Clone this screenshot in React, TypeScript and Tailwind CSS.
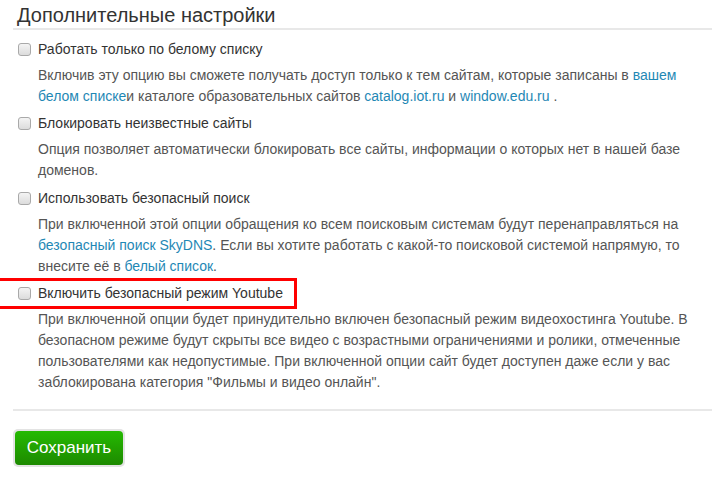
import type { ReactNode } from "react";

const link = "text-[#1f88b5] hover:underline";

function Option({
  label,
  children,
  marked = false,
}: {
  label: string;
  children: ReactNode;
  marked?: boolean;
}) {
  return (
    <div className="pl-[5px] pb-[7px]">
      <label className="relative flex h-[20px] items-center gap-[7px] text-[14px] text-[#333]">
        {marked && (
          <span className="pointer-events-none absolute -left-[24px] -top-[6px] h-[31px] w-[303px] border-[3px] border-[#ff0000]" />
        )}
        <input
          type="checkbox"
          className="h-[13px] w-[13px] shrink-0 appearance-none rounded-[3px] border border-[#a9a9a9] bg-gradient-to-b from-[#f4f4f4] to-[#dcdcdc]"
        />
        <span>{label}</span>
      </label>
      <p className="ml-[20px] mt-[5.5px] max-w-[666px] text-[14px] leading-[21px] text-[#555]">
        {children}
      </p>
    </div>
  );
}

export default function App() {
  return (
    <div className="min-h-[489px] bg-white pl-[13px] font-['Liberation_Sans',Arial,sans-serif]">
      <h2 className="h-[28px] pl-[4px] pt-[2px] text-[20px] leading-[26px] text-[#333]">
        Дополнительные настройки
      </h2>
      <div className="border-t-2 border-[#e8e8e8]" />

      <div className="pt-[9px]">
        <Option label="Работать только по белому списку">
          Включив эту опцию вы сможете получать доступ только к тем сайтам,
          которые записаны в{" "}
          <a href="#" className={link}>
            вашем белом списке
          </a>
          и каталоге образовательных сайтов{" "}
          <a href="#" className={link}>
            catalog.iot.ru
          </a>{" "}
          и{" "}
          <a href="#" className={link}>
            window.edu.ru
          </a>{" "}
          .
        </Option>
        <Option label="Блокировать неизвестные сайты">
          Опция позволяет автоматически блокировать все сайты, информации о
          которых нет в нашей базе доменов.
        </Option>
        <Option label="Использовать безопасный поиск">
          При включенной этой опции обращения ко всем поисковым системам будут
          перенаправляться на{" "}
          <a href="#" className={link}>
            безопасный поиск SkyDNS
          </a>
          . Если вы хотите работать с какой-то поисковой системой напрямую, то
          внесите её в{" "}
          <a href="#" className={link}>
            белый список
          </a>
          .
        </Option>
        <Option label="Включить безопасный режим Youtube" marked>
          При включенной опции будет принудительно включен безопасный режим
          видеохостинга Youtube. В безопасном режиме будут скрыты все видео с
          возрастными ограничениями и ролики, отмеченные пользователями как
          недопустимые. При включенной опции сайт будет доступен даже если у
          вас заблокирована категория "Фильмы и видео онлайн".
        </Option>
      </div>

      <div className="mt-[8.5px] border-t-2 border-[#e8e8e8]" />

      <div className="pt-[18px]">
        <div className="inline-block rounded-[5px] bg-[#e3e3e3] p-[2px]">
          <button
            type="button"
            className="h-[34px] w-[108px] rounded-[4px] bg-gradient-to-b from-[#25ba02] to-[#1d8a00] text-[17px] text-white"
          >
            Сохранить
          </button>
        </div>
      </div>
    </div>
  );
}
